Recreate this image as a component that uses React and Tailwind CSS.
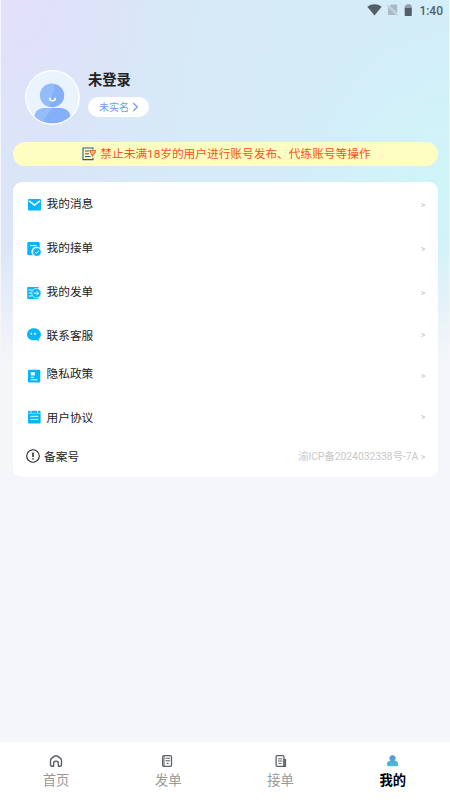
// App.jsx
import React, { useState } from "react";

/**
 * Android status bar
 */
const StatusBar = () => (
    <div className="flex h-5 items-center justify-end pr-[6px] text-[#545f66]">
        <svg width="15" height="12" viewBox="0 0 15 12" fill="currentColor">
            <path d="M0.3 2.8C4.5-.5 10.5-.5 14.7 2.8L7.5 11.6z" />
        </svg>
        <svg className="ml-[5px]" width="11" height="12" viewBox="0 0 11 12" fill="#a9bac4">
            <path d="M4 .5h5.2a1 1 0 0 1 1 1v7.7L2.6 1.9zM1 3l8 8H2a1 1 0 0 1-1-1z" />
            <path d="M.3 1l10.2 10.4" stroke="#a9bac4" strokeWidth="1" />
        </svg>
        <svg className="ml-[6px]" width="9" height="13" viewBox="0 0 9 13" fill="currentColor">
            <path d="M2.6.3h3.8v1.2h1.4v2.3H.7V1.5h1.9z" opacity=".55" />
            <path d="M.7 3.8h7.1v7.4a.8.8 0 0 1-.8.8H1.5a.8.8 0 0 1-.8-.8z" />
        </svg>
        <span className="ml-[6px] pt-[1px] font-[Roboto] text-[12px] leading-none font-medium">1:40</span>
    </div>
);

const Avatar = () => (
    <svg width="56" height="56" viewBox="0 0 56 56">
        <defs>
            <clipPath id="avatar-clip">
                <circle cx="28.500" cy="27.500" r="26" />
            </clipPath>
        </defs>
        <circle cx="28.500" cy="27.500" r="26.700" fill="#e9f4ff" stroke="#fff" strokeWidth="1.4" />
        <g clipPath="url(#avatar-clip)">
            <path d="M10.500 47.500c0-6 5-9.500 10-9.500h16c5 0 10 3.500 10 9.500l-5 6h-26z" fill="#86aff9" />
            <path d="M10.500 47.500c0-6 5-9.500 10-9.500h8l-11 14.500z" fill="#94bcf9" />
        </g>
        <circle cx="28.500" cy="25.500" r="11.700" fill="#86aff9" />
        <path d="M31 14.100A11.700 11.700 0 1 0 25.500 36.800z" fill="#94bcf9" />
        <path d="M25.700 28.200c.3 3.400 5.300 3.400 5.600 0" fill="none" stroke="#fff" strokeWidth="1.500" strokeLinecap="round" />
    </svg>
);

const Icon = ({ children }) => (
    <svg width="14" height="14" viewBox="0 0 14 14" fill="#08b4fb">
        {children}
    </svg>
);

const MailIcon = () => (
    <Icon>
        <rect x="1" y="1" width="13" height="11.500" rx="1" />
        <path d="M2 2.800l5.500 4.200L13 2.800" fill="none" stroke="#fff" strokeWidth="1.500" />
    </Icon>
);

const TakeIcon = () => (
    <Icon>
        <path d="M1.500 0h10a1.200 1.200 0 0 1 1.200 1.200V6A4.500 4.500 0 0 0 6 13.300H1.500a1.200 1.200 0 0 1-1.200-1.200V1.200A1.200 1.200 0 0 1 1.500 0z" />
        <path d="M3 3.600h6.500" stroke="#fff" strokeWidth="1" />
        <circle cx="9.900" cy="10" r="4.200" stroke="#fff" strokeWidth=".5" />
        <path d="M7.900 10l1.500 1.400L12 8.800" fill="none" stroke="#fff" strokeWidth="1" />
    </Icon>
);

const PublishIcon = () => (
    <Icon>
        <path d="M1 1h10.500v12H1a.8.8 0 0 1-.8-.8V1.800A.8.8 0 0 1 1 1z" />
        <path d="M1.600 4h4M1.600 7h3M1.600 10h3.800" stroke="#fff" strokeWidth=".9" />
        <circle cx="9.400" cy="7.200" r="4.700" stroke="#fff" strokeWidth=".7" />
        <path d="M6.800 7.200h4.600M9.600 5.200l2 2-2 2" fill="none" stroke="#fff" strokeWidth="1" />
    </Icon>
);

const ServiceIcon = () => (
    <Icon>
        <path d="M6.800.3c4 0 7.100 2.600 7.100 6.100 0 2-1 3.600-2.300 4.600l.6 2.300-3-1.200C4.200 13 .1 10.500.1 6.400.1 2.900 2.900.3 6.800.3z" />
        <path d="M4.400 4.700v2M8 4.700v2" stroke="#fff" strokeWidth="1.500" />
    </Icon>
);

const PrivacyIcon = () => (
    <Icon>
        <rect x="1" y=".7" width="12.300" height="12.800" rx="1" />
        <rect x="3.800" y="3.200" width="4" height="3.200" fill="#fff" />
        <path d="M3.800 8.300h3.200M3.800 10.700h6.600" stroke="#fff" strokeWidth="1.100" />
    </Icon>
);

const AgreementIcon = () => (
    <Icon>
        <rect x="1" y=".7" width="12.600" height="12.800" rx="1" />
        <path d="M1 3.400h12.600" stroke="#fff" strokeWidth=".5" />
        <path d="M3.300 6.300h8M3.300 9.400h8" stroke="#fff" strokeWidth=".9" />
        <path d="M4 .2v2.500M10.500.2v2.500" stroke="#fff" strokeWidth=".9" />
    </Icon>
);

const RecordIcon = () => (
    <svg width="14" height="14" viewBox="0 0 14 14" fill="none" stroke="#222">
        <circle cx="7" cy="7" r="6.300" strokeWidth="1.100" />
        <path d="M7 3.500v4.600M7 9.300v1.300" strokeWidth="1.500" />
    </svg>
);

const NoticeIcon = () => (
    <svg width="14" height="14" viewBox="0 0 14 14" fill="none">
        <path d="M11 2.500V1H1v11.600h10V10.800" stroke="#2c5791" strokeWidth="1.100" />
        <path d="M3 4h4.500M3 6.800h4M3 9.600h5.500" stroke="#2c5791" strokeWidth="1" />
        <path d="M8.300 3.600h5l-.2 1.600-2.700 3.600-1.800-3.400z" stroke="#f0632a" strokeWidth="1.200" />
        <circle cx="10.800" cy="5.300" r=".7" fill="#f0632a" />
    </svg>
);

const menuItems = [
    { label: "我的消息", icon: MailIcon, row: "h-11", text: "pb-[3px]" },
    { label: "我的接单", icon: TakeIcon, row: "h-11", text: "pb-[3px]" },
    { label: "我的发单", icon: PublishIcon, row: "h-11", text: "pb-[3px]" },
    { label: "联系客服", icon: ServiceIcon, row: "h-[39px]", text: "pt-[2px]" },
    { label: "隐私政策", icon: PrivacyIcon, row: "h-[43px]", text: "pb-[3px]" },
    { label: "用户协议", icon: AgreementIcon, row: "h-10", text: "pt-[2px]" },
];

const MenuCard = () => (
    <section className="mx-[12.5px] mt-4 h-[295px] rounded-[9px] bg-white pt-[1px] text-[11.7px] leading-4 text-[#222]">
        {menuItems.map(({ label, icon: ItemIcon, row, text }) => (
            <div key={label} className={`flex items-center pr-[12px] pl-[14.5px] ${row}`}>
                <ItemIcon />
                <span className={`ml-[5.5px] ${text}`}>{label}</span>
                <span className="ml-auto text-[9px] text-[#c4c4c4]">&gt;</span>
            </div>
        ))}
        <div className="flex h-[38px] items-center pr-[12px] pl-[13.5px]">
            <RecordIcon />
            <span className="ml-[4px] pt-[1px]">备案号</span>
            <span className="ml-auto pt-[1px] text-[10.3px] text-[#c8c8c8]">渝ICP备2024032338号-7A</span>
            <span className="ml-[2.5px] pt-[1px] text-[9px] text-[#c4c4c4]">&gt;</span>
        </div>
    </section>
);

/**
 * Bottom tabs
 */
const HomeIcon = () => (
    <svg width="14" height="14" viewBox="0 0 14 14" fill="none" stroke="#5c6067" strokeWidth="1.400" strokeLinejoin="round">
        <path d="M4.600 12.300H3c-.9 0-1.500-.6-1.500-1.500V6.400c0-.8.2-1.300.8-1.800l2.800-2.200c1.300-.9 2.500-.9 3.800 0l2.800 2.200c.6.5.8 1 .8 1.800v4.400c0 .9-.6 1.500-1.500 1.500H9.400V9.300c0-2.700-4.800-2.700-4.800 0z" />
    </svg>
);

const PostIcon = () => (
    <svg width="14" height="14" viewBox="0 0 14 14" fill="none" stroke="#5c6067">
        <rect x="1.700" y="1.700" width="8.800" height="10.600" rx="1.300" strokeWidth="1.300" />
        <path d="M3 1.500v11" strokeWidth="1" />
        <path d="M4.500 4.300h4.500M4.500 6.700h4.500M6 9.400h1.500" strokeWidth="1.100" />
    </svg>
);

const OrderIcon = () => (
    <svg width="14" height="14" viewBox="0 0 14 14" fill="none" stroke="#5c6067">
        <path d="M10 12.300H3.300A1.200 1.200 0 0 1 2.100 11.100V2.900a1.200 1.200 0 0 1 1.200-1.200h5.500A1.200 1.200 0 0 1 10 2.900z" strokeWidth="1.300" />
        <path d="M10 5.500h1.500v6.800H10z" strokeWidth="1.200" />
        <path d="M4 4.800h4.300M4 7h4.300M4.500 9.400h3" strokeWidth="1" />
    </svg>
);

const MineIcon = () => (
    <svg width="14" height="14" viewBox="0 0 14 14" fill="url(#mine-fill)">
        <defs>
            <linearGradient id="mine-fill" x1="0" y1="1" x2="0" y2="12" gradientUnits="userSpaceOnUse">
                <stop stopColor="#5b8ee0" />
                <stop offset="1" stopColor="#45bed0" />
            </linearGradient>
        </defs>
        <path d="M6.500 1.200a3 3 0 0 1 2 5.400c2.400.3 3.700 2 3.700 4.400 0 .8-.3 1.200-1 1.200H1.900c-.7 0-1-.4-1-1.200 0-2.400 1.300-4.100 3.700-4.400A3 3 0 0 1 6.500 1.200z" />
    </svg>
);

const tabs = [
    { key: "home", label: "首页", icon: HomeIcon },
    { key: "post", label: "发单", icon: PostIcon },
    { key: "order", label: "接单", icon: OrderIcon },
    { key: "mine", label: "我的", icon: MineIcon },
];

const TabBar = ({ active, onChange }) => (
    <nav className="-mx-px mt-auto flex h-[58px] bg-white pr-[1px]">
        {tabs.map(({ key, label, icon: TabIcon }) => (
            <button
                key={key}
                onClick={() => onChange(key)}
                className={`flex flex-1 flex-col items-center pt-3 text-[13.3px] leading-[26px] ${active === key ? "font-bold text-black" : "text-[#999]"
                    }`}
            >
                <TabIcon />
                <span>{label}</span>
            </button>
        ))}
    </nav>
);

export default function App() {
    const [tab, setTab] = useState("mine");

    return (
        <div className="flex h-screen flex-col border-x border-[#f4f6f9] bg-[#f5f6f9] bg-[linear-gradient(to_bottom,#f5f6f900_240px,#f5f6f9_365px),radial-gradient(circle_at_0_0,#e3e0fa_0px,#e3e0fa00_170px),radial-gradient(circle_at_100%_190px,#cff5f8_0px,#cff5f800_180px),linear-gradient(100deg,#dbe4f8_0px,#d7eaf8_200px,#d3edf9_440px)] font-[Roboto,'Noto_Sans_CJK_SC',sans-serif]">
            <StatusBar />

            <header className="-mx-px mt-[50px] flex h-[55px] pl-[24px]">
                <Avatar />
                <div className="ml-2">
                    <h1 className="-mt-px text-[14.3px] leading-[22px] font-bold text-[#222]">未登录</h1>
                    <button className="mt-[6px] flex h-5 items-center rounded-full bg-white pr-[9.5px] pl-[11px] text-[10px] text-[#6b9cf0]">
                        未实名
                        <svg className="ml-[3px]" width="7" height="10" viewBox="0 0 7 10" fill="none" stroke="#6b9cf0" strokeWidth="1.200">
                            <path d="M1.300 1l4 4-4 4" />
                        </svg>
                    </button>
                </div>
            </header>

            <div className="-mx-px">
                <div className="mx-[12.5px] mt-[17px] flex h-6 items-center justify-center rounded-full bg-[#fffec2] pl-[3px] text-[11.7px] text-[#fb5218]">
                    <NoticeIcon />
                    <span className="ml-[4px] pt-[2px]">禁止未满18岁的用户进行账号发布、代练账号等操作</span>
                </div>
                <MenuCard />
            </div>

            <TabBar active={tab} onChange={setTab} />
        </div>
    );
}
